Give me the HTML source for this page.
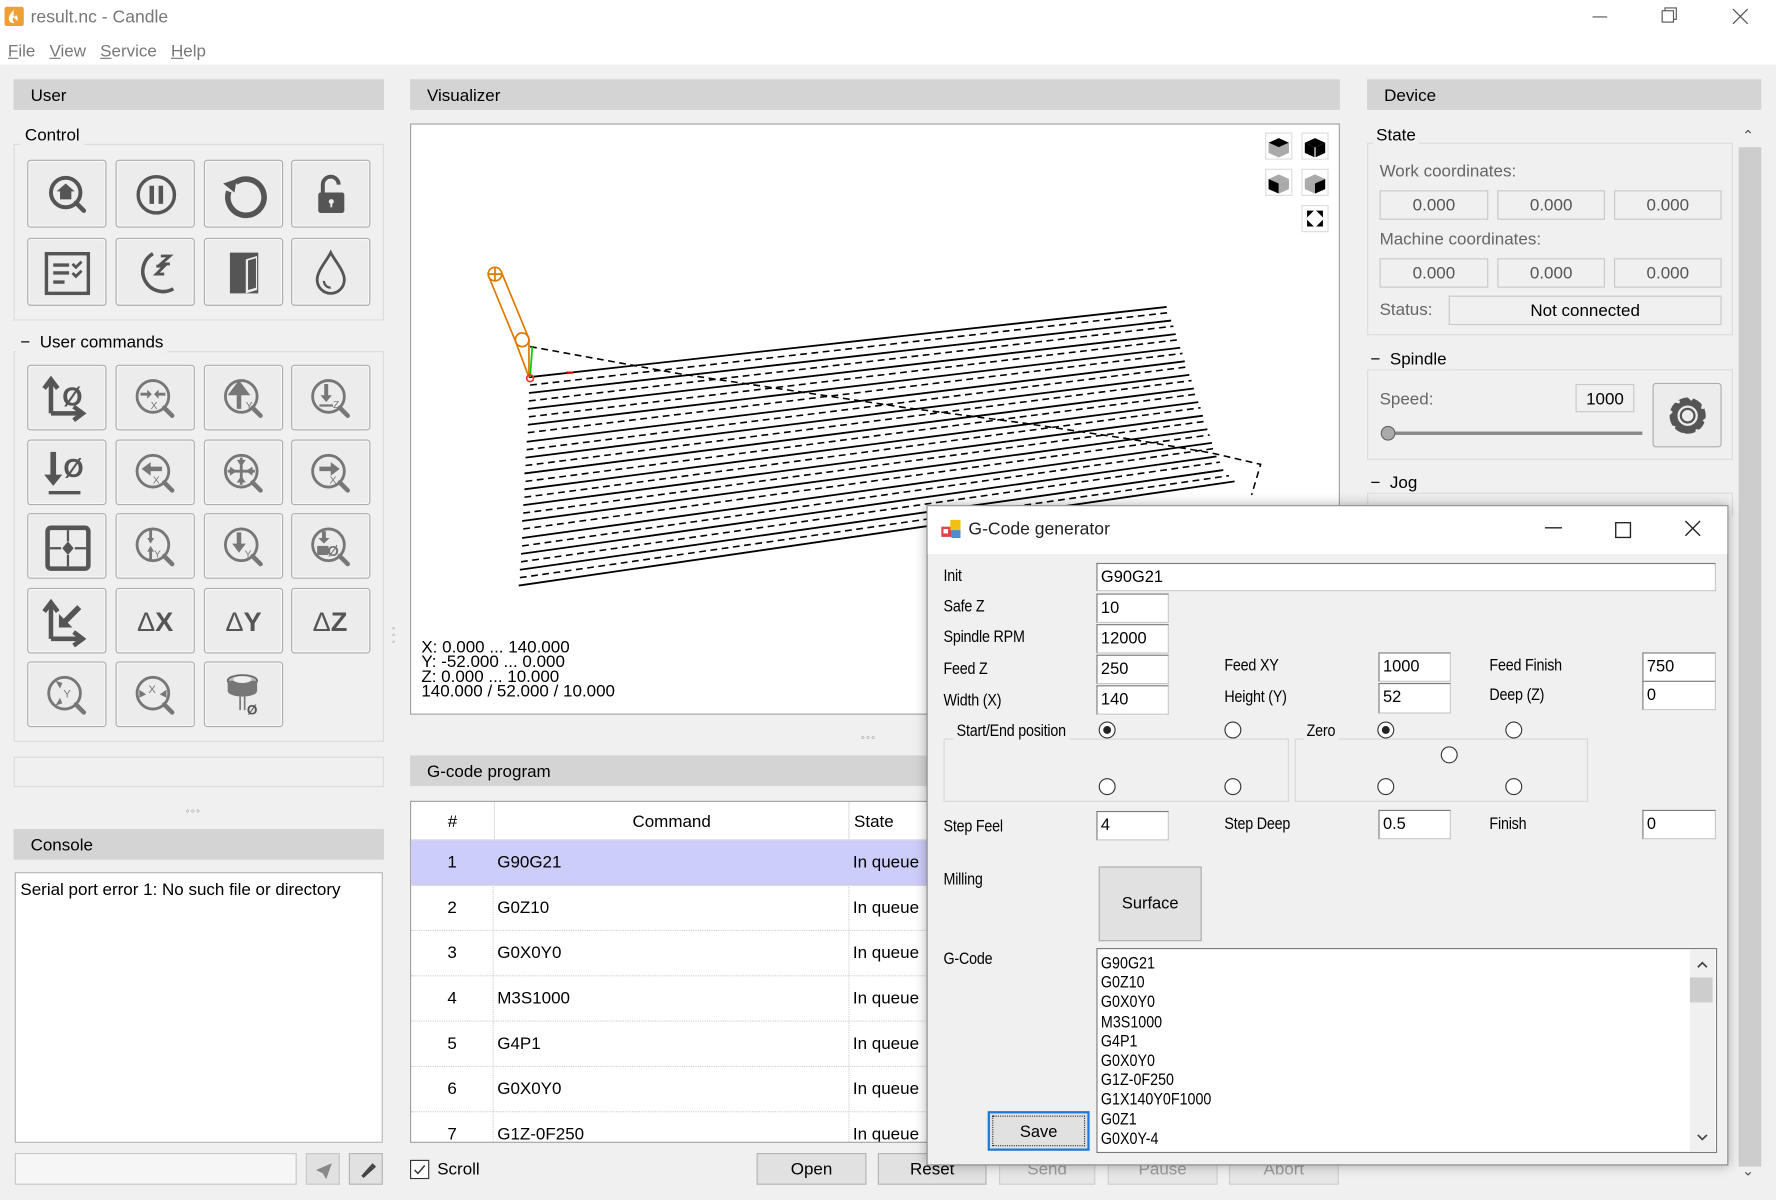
<!DOCTYPE html>
<html><head><meta charset="utf-8">
<style>
*{box-sizing:border-box;margin:0;padding:0}
html,body{width:1776px;height:1200px;overflow:hidden;background:#f0f0f0}
#w{position:absolute;left:0;top:0;width:1568px;height:1059px;transform:scale(1.13265);transform-origin:0 0;background:#f0f0f0;font-family:"Liberation Sans",sans-serif;font-size:15px;color:#000}
.a{position:absolute}
.hdr{position:absolute;background:#d4d4d4;height:27px;padding-left:15px;line-height:29px;font-size:15px}
.grp{position:absolute;border:1px solid #dcdcdc}
.btn{position:absolute;width:70px;height:60px;border:1px solid #adadad;border-radius:3px;background:#ececec;box-shadow:inset 0 0 0 1px #f8f8f8}
.btn svg{position:absolute;left:0;top:0}
.box{position:absolute;border:1px solid #c8c8c8;background:#f0f0f0;text-align:center;color:#555;font-size:15px}
.pb{position:absolute;height:28px;border:1px solid #b4b4b4;background:#e1e1e1;text-align:center;line-height:28px;font-size:15px}
.dis{color:#9a9a9a;background:#e6e6e6;border-color:#cfcfcf}
.tr{position:absolute;left:0;width:460px;height:40px;border-bottom:1px dotted #d0d0d0;font-size:15px;line-height:40px}
.dl{position:absolute;font-size:14.5px;color:#000;transform:scaleX(.87);transform-origin:0 0;letter-spacing:-.2px}
.in{position:absolute;background:#fff;border:1px solid #7a7a7a;border-right-color:#c8c8c8;border-bottom-color:#c8c8c8;font-size:14.5px;padding-left:3px;line-height:24px}
.rd{position:absolute;width:15px;height:15px;border:1.3px solid #333;border-radius:50%;background:#fff}
.rd.on::after{content:"";position:absolute;left:3px;top:3px;width:7px;height:7px;border-radius:50%;background:#222}
</style></head><body><div id="w">

<div class="a" style="left:0;top:0;width:1568px;height:57px;background:#fff"></div>
<div class="a" style="left:4px;top:6px;width:17px;height:17px;background:#eea035;border-radius:2px"><svg width="17" height="17"><path d="M8 3c-3 3-5 6-4 9 1 2 3 3 5 2-2-1-2-3-1-5 1 2 3 2 3 4 1-2 1-4-1-6 0 2-1 2-2 1 0-2 0-3 0-5z" fill="#fff"/></svg></div>
<div class="a" style="left:27px;top:7px;color:#777;font-size:15.5px">result.nc - Candle</div>
<svg class="a" style="left:1400px;top:0" width="168" height="30"><path d="M6 15h13" stroke="#555" stroke-width="1"/><rect x="67.5" y="9.5" width="10" height="10" fill="none" stroke="#555"/><path d="M70 9.5v-2.5h10v10h-2.5" fill="none" stroke="#555"/><path d="M130 8l13 13M143 8l-13 13" stroke="#555" stroke-width="1.1"/></svg>
<div class="a" style="left:7px;top:37px;color:#777;font-size:15px"><u>F</u>ile&nbsp;&nbsp;&nbsp;<u>V</u>iew&nbsp;&nbsp;&nbsp;<u>S</u>ervice&nbsp;&nbsp;&nbsp;<u>H</u>elp</div>
<div class="a" style="left:0;top:57px;width:1568px;height:1002px;background:#f0f0f0"></div>

<div class="hdr" style="left:12px;top:70px;width:327px">User</div>
<div class="grp" style="left:12px;top:127px;width:327px;height:156px"></div>
<div class="a" style="left:18px;top:111px;background:#f0f0f0;padding:0 4px">Control</div>

<div class="btn" style="left:24px;top:141px"><svg width="70" height="60"><circle cx="33" cy="28" r="13" fill="none" stroke="#555" stroke-width="3.5"/><path d="M42 37l7 7" stroke="#555" stroke-width="4" stroke-linecap="round"/><path d="M33 20l-8 7h3v7h10v-7h3z" fill="#555"/></svg></div>
<div class="btn" style="left:102px;top:141px"><svg width="70" height="60"><circle cx="35" cy="30" r="16" fill="none" stroke="#555" stroke-width="3"/><rect x="29" y="22" width="4" height="16" fill="#555"/><rect x="37" y="22" width="4" height="16" fill="#555"/></svg></div>
<div class="btn" style="left:180px;top:141px"><svg width="70" height="60"><path d="M27 19A16 16 0 1 1 21 27" fill="none" stroke="#555" stroke-width="5"/><path d="M16 20l12-4-2 12z" fill="#555"/></svg></div>
<div class="btn" style="left:257px;top:141px"><svg width="70" height="60"><path d="M27 28v-7a7 7 0 0 1 14 0" fill="none" stroke="#555" stroke-width="3.5"/><rect x="23" y="28" width="23" height="18" rx="2" fill="#555"/><circle cx="34.5" cy="36" r="2.2" fill="#eee"/><rect x="33.7" y="36" width="1.6" height="5" fill="#eee"/></svg></div>

<div class="btn" style="left:24px;top:210px"><svg width="70" height="60"><rect x="16" y="13" width="37" height="35" fill="none" stroke="#555" stroke-width="3"/><path d="M22 23h14M22 30h14M22 38h10" stroke="#555" stroke-width="3"/><path d="M39 22l3 3 5-5M39 30l3 3 5-5" fill="none" stroke="#555" stroke-width="2.5"/></svg></div>
<div class="btn" style="left:102px;top:210px"><svg width="70" height="60"><path d="M32 13A17 17 0 1 0 50 44" fill="none" stroke="#555" stroke-width="3"/><path d="M32 13A14 14 0 0 0 50 44" fill="none" stroke="#555" stroke-width="3"/><path d="M39 15h8l-8 7h8M35 24h7l-7 7h7" fill="none" stroke="#555" stroke-width="2.5"/></svg></div>
<div class="btn" style="left:180px;top:210px"><svg width="70" height="60"><path d="M22 12h25v36h-25z" fill="#555"/><path d="M36 18l10-3v30l-10 3z" fill="#ececec"/><path d="M38 19l7-2v26l-7 2z" fill="#555"/></svg></div>
<div class="btn" style="left:257px;top:210px"><svg width="70" height="60"><path d="M34 12C30 20 22 28 22 36a12 12 0 0 0 24 0c0-8-8-16-12-24z" fill="none" stroke="#555" stroke-width="2.5"/><path d="M28 37a6 6 0 0 0 6 6" fill="none" stroke="#555" stroke-width="2"/></svg></div>

<div class="grp" style="left:12px;top:310px;width:327px;height:345px"></div>
<div class="a" style="left:14px;top:294px;background:#f0f0f0;padding:0 4px">&minus;&nbsp;&nbsp;User commands</div>

<div class="btn" style="left:24px;top:322px;height:58px"><svg width="70" height="58"><path d="M20 42V14M14 20l6-8 6 8M20 42h26M40 36l8 6-8 6" fill="none" stroke="#555" stroke-width="4"/><text x="30" y="35" font-family="Liberation Sans" font-size="23" font-weight="bold" fill="#555">Ø</text></svg></div>
<div class="btn" style="left:102px;top:322px;height:58px"><svg width="70" height="58"><circle cx="32" cy="27" r="14" fill="none" stroke="#777" stroke-width="2.5"/><path d="M42 37l7 7" stroke="#777" stroke-width="4" stroke-linecap="round"/><path d="M21 25h8M43 25h-8" stroke="#777" stroke-width="2.5"/><path d="M27 21l4 4-4 4M37 21l-4 4 4 4" fill="#777"/><text x="30" y="38" font-size="9" fill="#777" font-family="Liberation Sans">X</text></svg></div>
<div class="btn" style="left:180px;top:322px;height:58px"><svg width="70" height="58"><circle cx="32" cy="27" r="14" fill="none" stroke="#777" stroke-width="2.5"/><path d="M42 37l7 7" stroke="#777" stroke-width="4" stroke-linecap="round"/><path d="M30 38V22M24 24l6-8 6 8z" stroke="#777" stroke-width="4" fill="#777"/><text x="36" y="38" font-size="9" fill="#777" font-family="Liberation Sans">Y</text></svg></div>
<div class="btn" style="left:257px;top:322px;height:58px"><svg width="70" height="58"><circle cx="32" cy="27" r="14" fill="none" stroke="#777" stroke-width="2.5"/><path d="M42 37l7 7" stroke="#777" stroke-width="4" stroke-linecap="round"/><path d="M30 16v12" stroke="#777" stroke-width="3.5"/><path d="M25 26l5 6 5-6z" fill="#777"/><path d="M24 35h12" stroke="#777" stroke-width="2"/><text x="36" y="37" font-size="9" fill="#777" font-family="Liberation Sans">Z</text></svg></div>
<div class="btn" style="left:24px;top:388px;height:58px"><svg width="70" height="58"><path d="M22 10v24" stroke="#555" stroke-width="5"/><path d="M14 30l8 10 8-10z" fill="#555"/><path d="M18 46h28" stroke="#555" stroke-width="3"/><text x="31" y="32" font-family="Liberation Sans" font-size="23" font-weight="bold" fill="#555">Ø</text></svg></div>
<div class="btn" style="left:102px;top:388px;height:58px"><svg width="70" height="58"><circle cx="32" cy="27" r="14" fill="none" stroke="#777" stroke-width="2.5"/><path d="M42 37l7 7" stroke="#777" stroke-width="4" stroke-linecap="round"/><path d="M28 25h12" stroke="#777" stroke-width="4"/><path d="M30 19l-8 6 8 6z" fill="#777"/><text x="32" y="38" font-size="9" fill="#777" font-family="Liberation Sans">X</text></svg></div>
<div class="btn" style="left:180px;top:388px;height:58px"><svg width="70" height="58"><circle cx="32" cy="27" r="14" fill="none" stroke="#777" stroke-width="2.5"/><path d="M42 37l7 7" stroke="#777" stroke-width="4" stroke-linecap="round"/><path d="M32 15v24M20 27h24" stroke="#777" stroke-width="2.5"/><path d="M28 17l4 6 4-6zM28 37l4-6 4 6zM22 23l6 4-6 4zM42 23l-6 4 6 4z" fill="#777"/></svg></div>
<div class="btn" style="left:257px;top:388px;height:58px"><svg width="70" height="58"><circle cx="32" cy="27" r="14" fill="none" stroke="#777" stroke-width="2.5"/><path d="M42 37l7 7" stroke="#777" stroke-width="4" stroke-linecap="round"/><path d="M24 25h12" stroke="#777" stroke-width="4"/><path d="M34 19l8 6-8 6z" fill="#777"/><text x="33" y="38" font-size="9" fill="#777" font-family="Liberation Sans">X</text></svg></div>
<div class="btn" style="left:24px;top:453px;height:58px"><svg width="70" height="58"><rect x="17" y="12" width="36" height="36" rx="3" fill="none" stroke="#555" stroke-width="4"/><path d="M35 14v10M35 36v10M19 30h10M41 30h10" stroke="#555" stroke-width="2"/><path d="M35 24l5 6-5 6-5-6z" fill="#555"/></svg></div>
<div class="btn" style="left:102px;top:453px;height:58px"><svg width="70" height="58"><circle cx="32" cy="27" r="14" fill="none" stroke="#777" stroke-width="2.5"/><path d="M42 37l7 7" stroke="#777" stroke-width="4" stroke-linecap="round"/><path d="M30 14v10M30 30v10" stroke="#777" stroke-width="2.5"/><path d="M27 21l3 5 3-5zM27 33l3-5 3 5z" fill="#777"/><text x="33" y="38" font-size="9" fill="#777" font-family="Liberation Sans">Y</text></svg></div>
<div class="btn" style="left:180px;top:453px;height:58px"><svg width="70" height="58"><circle cx="32" cy="27" r="14" fill="none" stroke="#777" stroke-width="2.5"/><path d="M42 37l7 7" stroke="#777" stroke-width="4" stroke-linecap="round"/><path d="M30 16v12" stroke="#777" stroke-width="4"/><path d="M24 26l6 8 6-8z" fill="#777"/><text x="35" y="38" font-size="9" fill="#777" font-family="Liberation Sans">Y</text></svg></div>
<div class="btn" style="left:257px;top:453px;height:58px"><svg width="70" height="58"><circle cx="32" cy="27" r="14" fill="none" stroke="#777" stroke-width="2.5"/><path d="M42 37l7 7" stroke="#777" stroke-width="4" stroke-linecap="round"/><path d="M28 15v7" stroke="#777" stroke-width="3.5"/><path d="M23 21l5 5 5-5z" fill="#777"/><rect x="22" y="28" width="10" height="8" fill="#777"/><text x="31" y="37" font-size="13" fill="#777" font-family="Liberation Sans" font-weight="bold">Ø</text></svg></div>
<div class="btn" style="left:24px;top:519px;height:58px"><svg width="70" height="58"><path d="M20 44V14M14 20l6-8 6 8M20 44h26M40 38l8 6-8 6" fill="none" stroke="#555" stroke-width="4"/><path d="M45 16L32 29" stroke="#555" stroke-width="5"/><path d="M27 22v12h12z" fill="#555"/></svg></div>
<div class="btn" style="left:102px;top:519px;height:58px"><svg width="70" height="58"><text x="18" y="37" font-family="Liberation Sans" font-size="24" fill="#555">Δ</text><text x="34" y="37" font-family="Liberation Sans" font-size="24" font-weight="bold" fill="#555">X</text></svg></div>
<div class="btn" style="left:180px;top:519px;height:58px"><svg width="70" height="58"><text x="18" y="37" font-family="Liberation Sans" font-size="24" fill="#555">Δ</text><text x="34" y="37" font-family="Liberation Sans" font-size="24" font-weight="bold" fill="#555">Y</text></svg></div>
<div class="btn" style="left:257px;top:519px;height:58px"><svg width="70" height="58"><text x="18" y="37" font-family="Liberation Sans" font-size="24" fill="#555">Δ</text><text x="34" y="37" font-family="Liberation Sans" font-size="24" font-weight="bold" fill="#555">Z</text></svg></div>
<div class="btn" style="left:24px;top:584px;height:58px"><svg width="70" height="58"><circle cx="32" cy="27" r="14" fill="none" stroke="#777" stroke-width="2.5"/><path d="M42 37l7 7" stroke="#777" stroke-width="4" stroke-linecap="round"/><path d="M24 16l6 2-2 5zM24 38l6-2-2-5z" fill="#777"/><text x="31" y="31" font-size="10" fill="#777" font-family="Liberation Sans">Y</text></svg></div>
<div class="btn" style="left:102px;top:584px;height:58px"><svg width="70" height="58"><circle cx="32" cy="27" r="14" fill="none" stroke="#777" stroke-width="2.5"/><path d="M42 37l7 7" stroke="#777" stroke-width="4" stroke-linecap="round"/><path d="M20 24l6 4-6 3zM44 24l-6 4 6 3z" fill="#777"/><text x="28" y="27" font-size="10" fill="#777" font-family="Liberation Sans">X</text></svg></div>
<div class="btn" style="left:180px;top:584px;height:58px"><svg width="70" height="58"><ellipse cx="33" cy="16" rx="13" ry="5" fill="#bbb" stroke="#666" stroke-width="1.5"/><path d="M20 16v9a13 5 0 0 0 26 0v-9" fill="#777"/><ellipse cx="33" cy="15" rx="8" ry="3" fill="#eee"/><path d="M31 30v12M35 30v12" stroke="#777" stroke-width="1.5"/><text x="37" y="46" font-size="12" fill="#555" font-weight="bold" font-family="Liberation Sans">Ø</text></svg></div>

<div class="a" style="left:12px;top:668px;width:327px;height:27px;border:1px solid #dcdcdc"></div>
<div class="a" style="left:164px;top:711px;color:#888;font-size:10px;letter-spacing:1px">&#9702;&#9702;&#9702;</div>

<div class="hdr" style="left:12px;top:732px;width:327px">Console</div>
<div class="a" style="left:13px;top:770px;width:325px;height:239px;background:#fff;border:1px solid #b4b4b4;padding:6px 4px;font-size:15px">Serial port error 1: No such file or directory</div>
<div class="a" style="left:13px;top:1018px;width:249px;height:28px;background:#f6f6f6;border:1px solid #c8c8c8"></div>
<div class="a" style="left:270px;top:1018px;width:30px;height:28px;background:#e1e1e1;border:1px solid #c8c8c8"><svg width="30" height="28"><path d="M8 14l14-6-5 14-3-5z" fill="#888"/></svg></div>
<div class="a" style="left:308px;top:1018px;width:30px;height:28px;background:#e1e1e1;border:1px solid #b4b4b4"><svg width="30" height="28"><path d="M10 19l8-9 3 3-9 8z" fill="#444"/><path d="M18 10l2-2 3 3-2 2" fill="#444"/></svg></div>

<div class="hdr" style="left:362px;top:70px;width:821px">Visualizer</div>
<div class="a" style="left:362px;top:109px;width:821px;height:522px;background:#fff;border:1px solid #a0a0a0"></div>
<svg class="a" style="left:362px;top:109px" width="821" height="522">
<g transform="translate(-362,-109)">
<g stroke="#000" fill="none" stroke-width="1.6">
<path d="M467 333L1030 271M467 347L1034 283M466 361L1038 295M466 375L1042 307M465 390L1046 319M464 404L1050 331M463 418L1054 343M463 432L1058 355M462 446L1062 367M461 460L1066 379M461 475L1070 391M460 489L1074 403M459 503L1080 415M458 517L1090 425"/>
</g>
<g stroke="#000" fill="none" stroke-width="1.4" stroke-dasharray="6,4">
<path d="M468 340L1032 276M467 354L1036 288M467 368L1040 300M466 382L1044 312M465 397L1048 324M464 411L1052 336M464 425L1056 348M463 439L1060 360M462 453L1064 372M462 467L1068 384M461 482L1072 396M460 496L1077 408M459 510L1085 420"/>
<path d="M468 306L600 330L700 345L800 360L900 373L1000 388L1070 400L1113 410L1105 437"/>
</g>
<g stroke="#e07800" fill="none" stroke-width="1.5"><path d="M431 243l24 58M443 241l24 58M455 301l12 32M467 299l0 34"/><circle cx="437" cy="242" r="6"/><circle cx="461" cy="300" r="6"/><path d="M431 242h12M437 236v12"/></g>
<path d="M468 333L470 306" stroke="#0c0" stroke-width="1.5"/>
<circle cx="468" cy="334" r="3" fill="none" stroke="#e33" stroke-width="1.5"/>
<path d="M500 329h6" stroke="#d00" stroke-width="2"/>
</g>
<g transform="translate(755,8)">
<rect x="0.5" y="0.5" width="23" height="23" fill="#fff" stroke="#ddd"/><path d="M12 5l9 4-9 4-9-4z" fill="#000"/><path d="M3 9l9 4v9l-9-4zM21 9l-9 4v9l9-4z" fill="#aaa"/>
<rect x="32.5" y="0.5" width="23" height="23" fill="#fff" stroke="#ddd"/><path d="M44 5l9 4-9 4-9-4z" fill="#000"/><path d="M35 9l9 4v9l-9-4zM53 9l-9 4v9l9-4z" fill="#000"/><path d="M44 13v9" stroke="#fff"/>
<rect x="0.5" y="32.5" width="23" height="23" fill="#fff" stroke="#ddd"/><path d="M12 37l9 4-9 4-9-4z" fill="#aaa"/><path d="M3 41l9 4v9l-9-4z" fill="#000"/><path d="M21 41l-9 4v9l9-4z" fill="#aaa"/>
<rect x="32.5" y="32.5" width="23" height="23" fill="#fff" stroke="#ddd"/><path d="M44 37l9 4-9 4-9-4z" fill="#aaa"/><path d="M35 41l9 4v9l-9-4z" fill="#aaa"/><path d="M53 41l-9 4v9l9-4z" fill="#000"/>
<rect x="32.5" y="64.5" width="23" height="23" fill="#fff" stroke="#ddd"/><path d="M37 69h6l-6 6zM51 69h-6l6 6zM37 83h6l-6-6zM51 83h-6l6-6z" fill="#000"/>
</g>
</svg>
<div class="a" style="left:372px;top:565px;font-size:15px;line-height:13px">X: 0.000 ... 140.000<br>Y: -52.000 ... 0.000<br>Z: 0.000 ... 10.000<br>140.000 / 52.000 / 10.000</div>
<div class="a" style="left:346px;top:552px;color:#888;font-size:8px;line-height:6px">&#9702;<br>&#9702;<br>&#9702;</div>
<div class="a" style="left:760px;top:646px;color:#888;font-size:10px;letter-spacing:1px">&#9702;&#9702;&#9702;</div>

<div class="hdr" style="left:362px;top:667px;width:821px">G-code program</div>
<div class="a" style="left:362px;top:707px;width:821px;height:302px;background:#fff;border:1px solid #a0a0a0;overflow:hidden">
 <div class="a" style="left:0;top:0;width:821px;height:34px;border-bottom:1px solid #d8d8d8;line-height:36px">
  <div class="a" style="left:0;width:73px;text-align:center">#</div>
  <div class="a" style="left:73px;width:314px;text-align:center;border-left:1px solid #e0e0e0;border-right:1px solid #e0e0e0;height:34px">Command</div>
  <div class="a" style="left:391px">State</div>
 </div>
 <div class="a" style="left:72px;top:34px;width:1px;height:280px;border-left:1px dotted #d0d0d0"></div>
 <div class="a" style="left:386px;top:34px;width:1px;height:280px;border-left:1px dotted #d0d0d0"></div>
 <div class="tr" style="top:34px;background:#cdcdfa;width:821px"><span class="a" style="left:32px">1</span><span class="a" style="left:76px">G90G21</span><span class="a" style="left:390px">In queue</span></div>
 <div class="tr" style="top:74px"><span class="a" style="left:32px">2</span><span class="a" style="left:76px">G0Z10</span><span class="a" style="left:390px">In queue</span></div>
 <div class="tr" style="top:114px"><span class="a" style="left:32px">3</span><span class="a" style="left:76px">G0X0Y0</span><span class="a" style="left:390px">In queue</span></div>
 <div class="tr" style="top:154px"><span class="a" style="left:32px">4</span><span class="a" style="left:76px">M3S1000</span><span class="a" style="left:390px">In queue</span></div>
 <div class="tr" style="top:194px"><span class="a" style="left:32px">5</span><span class="a" style="left:76px">G4P1</span><span class="a" style="left:390px">In queue</span></div>
 <div class="tr" style="top:234px"><span class="a" style="left:32px">6</span><span class="a" style="left:76px">G0X0Y0</span><span class="a" style="left:390px">In queue</span></div>
 <div class="tr" style="top:274px"><span class="a" style="left:32px">7</span><span class="a" style="left:76px">G1Z-0F250</span><span class="a" style="left:390px">In queue</span></div>
</div>
<div class="a" style="left:362px;top:1024px;width:17px;height:17px;border:1px solid #333;background:#fff"><svg width="15" height="15"><path d="M3 8l3 3 6-7" fill="none" stroke="#333" stroke-width="1.3"/></svg></div>
<div class="a" style="left:386px;top:1024px">Scroll</div>
<div class="pb" style="left:668px;top:1018px;width:97px">Open</div>
<div class="pb" style="left:775px;top:1018px;width:96px">Reset</div>
<div class="pb dis" style="left:882px;top:1018px;width:85px">Send</div>
<div class="pb dis" style="left:978px;top:1018px;width:97px">Pause</div>
<div class="pb dis" style="left:1085px;top:1018px;width:97px">Abort</div>

<div class="hdr" style="left:1207px;top:70px;width:348px">Device</div>
<div class="a" style="left:1535px;top:109px;width:20px;height:941px;background:#f0f0f0"></div>
<div class="a" style="left:1535px;top:130px;width:20px;height:900px;background:#cdcdcd"></div>
<div class="a" style="left:1538px;top:112px;color:#555;font-size:13px">&#8963;</div>
<div class="a" style="left:1538px;top:1026px;color:#555;font-size:13px">&#8964;</div>
<div class="grp" style="left:1207px;top:126px;width:323px;height:170px"></div>
<div class="a" style="left:1212px;top:111px;background:#f0f0f0;padding:0 3px">State</div>
<div class="a" style="left:1218px;top:143px;color:#666">Work coordinates:</div>
<div class="box" style="left:1218px;top:168px;width:96px;height:26px;line-height:26px">0.000</div>
<div class="box" style="left:1322px;top:168px;width:95px;height:26px;line-height:26px">0.000</div>
<div class="box" style="left:1425px;top:168px;width:95px;height:26px;line-height:26px">0.000</div>
<div class="a" style="left:1218px;top:203px;color:#666">Machine coordinates:</div>
<div class="box" style="left:1218px;top:228px;width:96px;height:26px;line-height:26px">0.000</div>
<div class="box" style="left:1322px;top:228px;width:95px;height:26px;line-height:26px">0.000</div>
<div class="box" style="left:1425px;top:228px;width:95px;height:26px;line-height:26px">0.000</div>
<div class="a" style="left:1218px;top:265px;color:#666">Status:</div>
<div class="box" style="left:1279px;top:261px;width:241px;height:26px;line-height:26px;color:#000">Not connected</div>
<div class="grp" style="left:1207px;top:326px;width:323px;height:80px"></div>
<div class="a" style="left:1207px;top:309px;background:#f0f0f0;padding:0 3px">&minus;&nbsp;&nbsp;Spindle</div>
<div class="a" style="left:1218px;top:344px;color:#666">Speed:</div>
<div class="box" style="left:1391px;top:339px;width:52px;height:25px;line-height:25px;color:#000">1000</div>
<div class="a" style="left:1459px;top:338px;width:61px;height:57px;border:1px solid #adadad;border-radius:3px;background:#ececec"><svg width="60" height="56"><circle cx="30" cy="28" r="16" fill="#555"/><path d="M30 10l4 4M44 17l-1 5M48 30l-4 3M42 42l-5-1M30 47l-4-3M17 42l1-5M12 28l4-4M18 15l5 1" stroke="#ececec" stroke-width="2.5"/><circle cx="30" cy="28" r="9" fill="#ececec"/><circle cx="30" cy="28" r="6" fill="none" stroke="#555" stroke-width="2"/></svg></div>
<div class="a" style="left:1226px;top:381px;width:224px;height:3px;background:#888"></div>
<div class="a" style="left:1219px;top:376px;width:13px;height:13px;border-radius:50%;background:#aaa;border:1px solid #666"></div>
<div class="grp" style="left:1207px;top:435px;width:323px;height:20px;border-bottom:none"></div>
<div class="a" style="left:1207px;top:418px;background:#f0f0f0;padding:0 3px">&minus;&nbsp;&nbsp;Jog</div>

<div class="a" style="left:818px;top:446px;width:708px;height:583px;background:#f0f0f0;border:1px solid #888;box-shadow:0 0 10px rgba(0,0,0,.3)">
 <div class="a" style="left:0;top:0;width:706px;height:42px;background:#fff"></div>
 <svg class="a" style="left:12px;top:11px" width="18" height="18"><rect x="0" y="7" width="9" height="9" fill="#d44"/><rect x="8" y="1" width="9" height="9" fill="#f2c010"/><rect x="9" y="10" width="8" height="7" fill="#58c"/><rect x="2" y="9" width="4" height="4" fill="#fff"/></svg>
 <div class="a" style="left:36px;top:12px;font-size:15.5px;color:#222">G-Code generator</div>
 <svg class="a" style="left:540px;top:10px" width="160" height="24"><path d="M5 9h15" stroke="#222" stroke-width="1.3"/><rect x="67.5" y="4.5" width="13" height="13" fill="none" stroke="#222" stroke-width="1.2"/><path d="M129 3l13 13M142 3l-13 13" stroke="#222" stroke-width="1.2"/></svg>
</div>
<div class="dl" style="left:833px;top:501px">Init</div>
<div class="in" style="left:968px;top:497px;width:547px;height:25px">G90G21</div>
<div class="dl" style="left:833px;top:528px">Safe Z</div>
<div class="in" style="left:968px;top:524px;width:64px;height:26px">10</div>
<div class="dl" style="left:833px;top:555px">Spindle RPM</div>
<div class="in" style="left:968px;top:551px;width:64px;height:26px">12000</div>
<div class="dl" style="left:833px;top:583px">Feed Z</div>
<div class="in" style="left:968px;top:578px;width:64px;height:26px">250</div>
<div class="dl" style="left:833px;top:611px">Width (X)</div>
<div class="in" style="left:968px;top:605px;width:64px;height:26px">140</div>
<div class="dl" style="left:1081px;top:580px">Feed XY</div>
<div class="in" style="left:1217px;top:576px;width:64px;height:26px">1000</div>
<div class="dl" style="left:1081px;top:608px">Height (Y)</div>
<div class="in" style="left:1217px;top:603px;width:64px;height:27px">52</div>
<div class="dl" style="left:1315px;top:580px">Feed Finish</div>
<div class="in" style="left:1450px;top:576px;width:65px;height:26px">750</div>
<div class="dl" style="left:1315px;top:606px">Deep (Z)</div>
<div class="in" style="left:1450px;top:601px;width:65px;height:26px">0</div>

<div class="a" style="left:833px;top:652px;width:305px;height:56px;border:1px solid #d8d8d8"></div>
<div class="a" style="left:1143px;top:652px;width:259px;height:56px;border:1px solid #d8d8d8"></div>
<div class="dl" style="left:842px;top:638px;background:#f0f0f0;padding:0 3px">Start/End position</div>
<div class="dl" style="left:1151px;top:638px;background:#f0f0f0;padding:0 3px">Zero</div>
<div class="rd on" style="left:970px;top:637px"></div>
<div class="rd" style="left:1081px;top:637px"></div>
<div class="rd" style="left:970px;top:687px"></div>
<div class="rd" style="left:1081px;top:687px"></div>
<div class="rd on" style="left:1216px;top:637px"></div>
<div class="rd" style="left:1329px;top:637px"></div>
<div class="rd" style="left:1272px;top:659px"></div>
<div class="rd" style="left:1216px;top:687px"></div>
<div class="rd" style="left:1329px;top:687px"></div>

<div class="dl" style="left:833px;top:722px">Step Feel</div>
<div class="in" style="left:968px;top:716px;width:64px;height:26px">4</div>
<div class="dl" style="left:1081px;top:720px">Step Deep</div>
<div class="in" style="left:1217px;top:715px;width:64px;height:26px">0.5</div>
<div class="dl" style="left:1315px;top:720px">Finish</div>
<div class="in" style="left:1450px;top:715px;width:65px;height:26px">0</div>
<div class="dl" style="left:833px;top:769px">Milling</div>
<div class="a" style="left:970px;top:765px;width:91px;height:66px;background:#e1e1e1;border:1px solid #adadad;text-align:center;line-height:64px;font-size:14.5px">Surface</div>
<div class="dl" style="left:833px;top:839px">G-Code</div>
<div class="a" style="left:968px;top:837px;width:548px;height:181px;background:#fff;border:1px solid #7a7a7a;overflow:hidden">
 <div class="a" style="left:3px;top:5px;font-size:14.5px;line-height:17.2px;transform:scaleX(.87);transform-origin:0 0">G90G21<br>G0Z10<br>G0X0Y0<br>M3S1000<br>G4P1<br>G0X0Y0<br>G1Z-0F250<br>G1X140Y0F1000<br>G0Z1<br>G0X0Y-4</div>
 <div class="a" style="left:523px;top:0;width:22px;height:179px;background:#f0f0f0"></div>
 <div class="a" style="left:523px;top:25px;width:20px;height:22px;background:#cdcdcd"></div>
 <svg class="a" style="left:523px;top:0" width="22" height="179"><path d="M7 16l4-4 4 4M7 164l4 4 4-4" fill="none" stroke="#444" stroke-width="1.5"/></svg>
</div>
<div class="a" style="left:872px;top:981px;width:90px;height:35px;border:2px solid #1e7ad8;background:#e1e1e1"><div style="position:absolute;left:2px;top:2px;right:2px;bottom:2px;border:1px dotted #333;text-align:center;line-height:28px;font-size:14.5px">Save</div></div>

</div></body></html>
